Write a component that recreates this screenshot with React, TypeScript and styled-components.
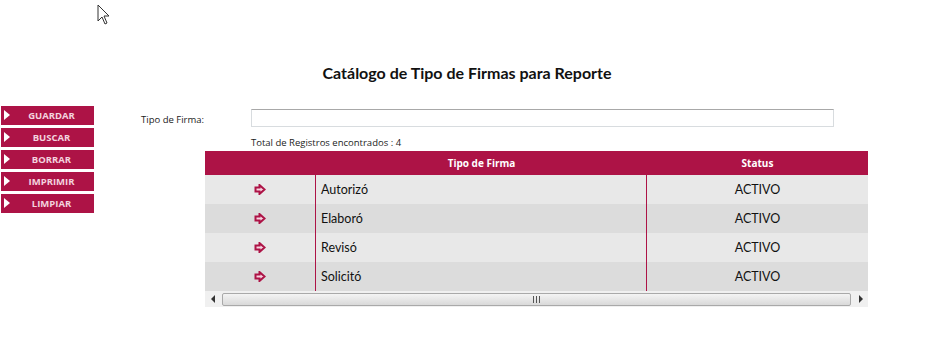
import styled, { createGlobalStyle } from "styled-components";

const crimson = "#ad1346";

const rows = [
  { tipo: "Autorizó", status: "ACTIVO" },
  { tipo: "Elaboró", status: "ACTIVO" },
  { tipo: "Revisó", status: "ACTIVO" },
  { tipo: "Solicitó", status: "ACTIVO" },
];

const buttons = ["GUARDAR", "BUSCAR", "BORRAR", "IMPRIMIR", "LIMPIAR"];

export default function App() {
  return (
    <Page>
      <GlobalStyle />
      <Cursor width="14" height="22" viewBox="0 0 14 22">
        <path d="M1 1 L1 17 L5 13 L8 20 L10 19 L7 12 L12 12 Z" fill="#fff" stroke="#333" strokeWidth="1" />
      </Cursor>
      <Title>Catálogo de Tipo de Firmas para Reporte</Title>
      <Main>
        <Sidebar>
          {buttons.map((b) => (
            <MenuButton key={b}>
              <Tri />
              <span>{b}</span>
            </MenuButton>
          ))}
        </Sidebar>
        <Content>
          <FormRow>
            <Label>Tipo de Firma:</Label>
            <Input />
          </FormRow>
          <Total>Total de Registros encontrados : 4</Total>
          <Grid>
            <HeadRow>
              <HeadCell $w={111} />
              <HeadCell $w={331}>Tipo de Firma</HeadCell>
              <HeadCell $w={221}>Status</HeadCell>
            </HeadRow>
            {rows.map((r, i) => (
              <Row key={r.tipo} $alt={i % 2 === 1}>
                <IconCell>
                  <svg width="12" height="11" viewBox="0 0 12 11">
                    <path d="M1.5 3.5 H5.5 V1 L10.5 5.5 L5.5 10 V7.5 H1.5 Z" fill="#f6d3df" stroke={crimson} strokeWidth="2" />
                  </svg>
                </IconCell>
                <TextCell>{r.tipo}</TextCell>
                <StatusCell>{r.status}</StatusCell>
              </Row>
            ))}
            <Scrollbar>
              <ScrollBtn>
                <svg width="5" height="8" viewBox="0 0 5 8"><path d="M4 0 L0 4 L4 8 Z" fill="#333" /></svg>
              </ScrollBtn>
              <Thumb>
                <svg width="7" height="7" viewBox="0 0 7 7">
                  <path d="M0.5 0 V7 M3.5 0 V7 M6.5 0 V7" stroke="#555" strokeWidth="1" />
                </svg>
              </Thumb>
              <ScrollBtn>
                <svg width="5" height="8" viewBox="0 0 5 8"><path d="M1 0 L5 4 L1 8 Z" fill="#333" /></svg>
              </ScrollBtn>
            </Scrollbar>
          </Grid>
        </Content>
      </Main>
    </Page>
  );
}

const GlobalStyle = createGlobalStyle`
  body {
    margin: 0;
    background: #fff;
    font-family: Lato, "Open Sans", sans-serif;
    color: #111;
  }
`;

const Page = styled.div`
  position: relative;
  width: 934px;
  height: 361px;
  overflow: hidden;
`;

const Cursor = styled.svg`
  position: absolute;
  left: 97px;
  top: 4px;
`;

const Title = styled.h1`
  margin: 0;
  padding-top: 62px;
  text-align: center;
  font-size: 16px;
  line-height: 22px;
  font-weight: 700;
  color: #111;
`;

const Main = styled.div`
  display: flex;
  margin-top: 22px;
`;

const Sidebar = styled.div`
  display: flex;
  flex-direction: column;
  gap: 3px;
  width: 93px;
  margin-left: 1px;
  flex-shrink: 0;
`;

const MenuButton = styled.div`
  position: relative;
  height: 19px;
  background: ${crimson};
  display: flex;
  align-items: center;
  justify-content: center;
  span {
    font-family: "Open Sans", sans-serif;
    font-size: 9.5px;
    font-weight: 700;
    color: #f3d3df;
    padding-left: 8px;
  }
`;

const Tri = styled.i`
  position: absolute;
  left: 3px;
  top: 4px;
  width: 0;
  height: 0;
  border-top: 5px solid transparent;
  border-bottom: 5px solid transparent;
  border-left: 6px solid #fff;
`;

const Content = styled.div`
  display: flex;
  flex-direction: column;
  margin-left: 47px;
`;

const FormRow = styled.div`
  display: flex;
  align-items: center;
  margin-top: 3px;
  height: 18px;
`;

const Label = styled.span`
  width: 110px;
  font-family: "Open Sans", sans-serif;
  font-size: 9.5px;
  color: #222;
  padding-top: 2px;
`;

const Input = styled.div`
  width: 581px;
  height: 16px;
  border: 1px solid #d8dcdf;
  border-top-color: #a8a8a8;
`;

const Total = styled.div`
  margin: 9px 0 0 110px;
  height: 15px;
  font-family: "Open Sans", sans-serif;
  font-size: 9.5px;
  color: #222;
`;

const Grid = styled.div`
  margin-left: 64px;
  width: 663px;
  display: flex;
  flex-direction: column;
`;

const HeadRow = styled.div`
  display: flex;
  height: 24px;
  background: ${crimson};
`;

const HeadCell = styled.div<{ $w: number }>`
  width: ${(p) => p.$w}px;
  display: flex;
  align-items: center;
  justify-content: center;
  color: #fff;
  font-family: "Open Sans", sans-serif;
  font-size: 10px;
  font-weight: 700;
`;

const Row = styled.div<{ $alt: boolean }>`
  display: flex;
  height: 29px;
  background: ${(p) => (p.$alt ? "#dcdcdc" : "#e8e8e8")};
`;

const IconCell = styled.div`
  width: 111px;
  display: flex;
  align-items: center;
  justify-content: center;
  padding-bottom: 1px;
  border-right: 1px solid ${crimson};
  box-sizing: border-box;
`;

const TextCell = styled.div`
  width: 331px;
  box-sizing: border-box;
  padding-left: 5px;
  display: flex;
  align-items: center;
  font-size: 12.5px;
  border-right: 1px solid ${crimson};
`;

const StatusCell = styled.div`
  width: 221px;
  display: flex;
  align-items: center;
  justify-content: center;
  font-size: 12.5px;
`;

const Scrollbar = styled.div`
  display: flex;
  align-items: center;
  height: 16px;
  background: #f0f0f0;
`;

const ScrollBtn = styled.div`
  width: 16px;
  height: 16px;
  display: flex;
  align-items: center;
  justify-content: center;
  flex-shrink: 0;
`;

const Thumb = styled.div`
  flex: 1;
  height: 11px;
  margin: 0 1px;
  border: 1px solid #a9a9a9;
  border-radius: 2px;
  background: linear-gradient(#f4f4f4, #d9d9d9);
  display: flex;
  align-items: center;
  justify-content: center;
`;
